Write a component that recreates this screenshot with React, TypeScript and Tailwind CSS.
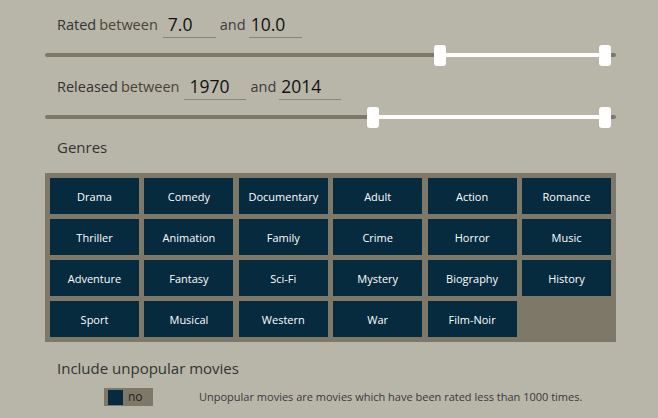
import { useState } from "react";

const genres = [
	"Drama", "Comedy", "Documentary", "Adult", "Action", "Romance",
	"Thriller", "Animation", "Family", "Crime", "Horror", "Music",
	"Adventure", "Fantasy", "Sci-Fi", "Mystery", "Biography", "History",
	"Sport", "Musical", "Western", "War", "Film-Noir",
];

// range slider drawn as track + two handles; positions are px within 571px track
function RangeSlider({ from, to }: { from: number; to: number }) {
	return (
		<div className="relative h-[21px] w-[571px]">
			<div className="absolute left-0 right-0 top-[8px] h-[4px] rounded-full bg-[#7e7868]" />
			<div
				className="absolute top-[8px] h-[4px] bg-white"
				style={{ left: from + 12, width: to - from - 12 }}
			/>
			<div
				className="absolute top-0 h-[21px] w-[12px] rounded-[3px] bg-white"
				style={{ left: from }}
			/>
			<div
				className="absolute top-0 h-[21px] w-[12px] rounded-[3px] bg-white"
				style={{ left: to }}
			/>
		</div>
	);
}

function RangeRow({
	label,
	min,
	max,
	inputWidth,
}: {
	label: string;
	min: string;
	max: string;
	inputWidth: string;
}) {
	return (
		<div className="flex h-[27px] items-center pl-[12px] text-[14.5px] text-[#333]">
			<span>{label}</span>
			<span className="ml-[3px] text-[#4a4334]">between</span>
			<div
				className={`ml-[5px] flex h-[27px] items-center border-b border-[#8a8578] pl-[5px] text-[17.5px] text-[#111] ${inputWidth}`}
			>
				{min}
			</div>
			<span className="ml-[4px] text-[#3b3a44]">and</span>
			<div
				className={`ml-[3px] flex h-[27px] items-center border-b border-[#8a8578] pl-[2px] text-[17.5px] text-[#111] ${inputWidth}`}
			>
				{max}
			</div>
		</div>
	);
}

export default function App() {
	const [selected] = useState<string[]>([]);

	return (
		<div
			className="min-h-screen w-full bg-[#b8b6a8] pl-[45px] pt-[11px]"
			style={{ fontFamily: '"Open Sans", "Noto Sans", sans-serif' }}
		>
			<RangeRow label="Rated" min="7.0" max="10.0" inputWidth="w-[53px]" />
			<div className="mt-[7px]">
				<RangeSlider from={389} to={554} />
			</div>

			<div className="mt-[7px]">
				<RangeRow label="Released" min="1970" max="2014" inputWidth="w-[62px]" />
			</div>
			<div className="mt-[7px]">
				<RangeSlider from={322} to={554} />
			</div>

			<div className="mt-[7px] pl-[12px] text-[15px] leading-[24px] text-[#333]">
				Genres
			</div>

			<div className="mt-[14px] grid w-[571px] grid-cols-6 gap-x-[5.4px] gap-y-[5px] bg-[#7e7868] p-[5px]">
				{genres.map((g) => (
					<button
						key={g}
						type="button"
						className={`flex h-[36px] items-center justify-center pt-[2px] text-[11px] text-white ${
							selected.includes(g) ? "bg-[#7e7868]" : "bg-[#062b3e]"
						}`}
					>
						{g}
					</button>
				))}
			</div>

			<div className="mt-[14px] pl-[12px] text-[15px] leading-[24px] text-[#333]">
				Include unpopular movies
			</div>

			<div className="mt-[8px] flex items-center">
				<div className="ml-[59px] flex h-[18px] w-[49px] items-center bg-[#7e7868] pl-[4px]">
					<div className="h-[15px] w-[15px] bg-[#062b3e]" />
					<span className="ml-[5px] text-[12px] text-[#222]">no</span>
				</div>
				<span className="ml-[46px] text-[11px] text-[#3a3840]">
					Unpopular movies are movies which have been rated less than 1000 times.
				</span>
			</div>
		</div>
	);
}
